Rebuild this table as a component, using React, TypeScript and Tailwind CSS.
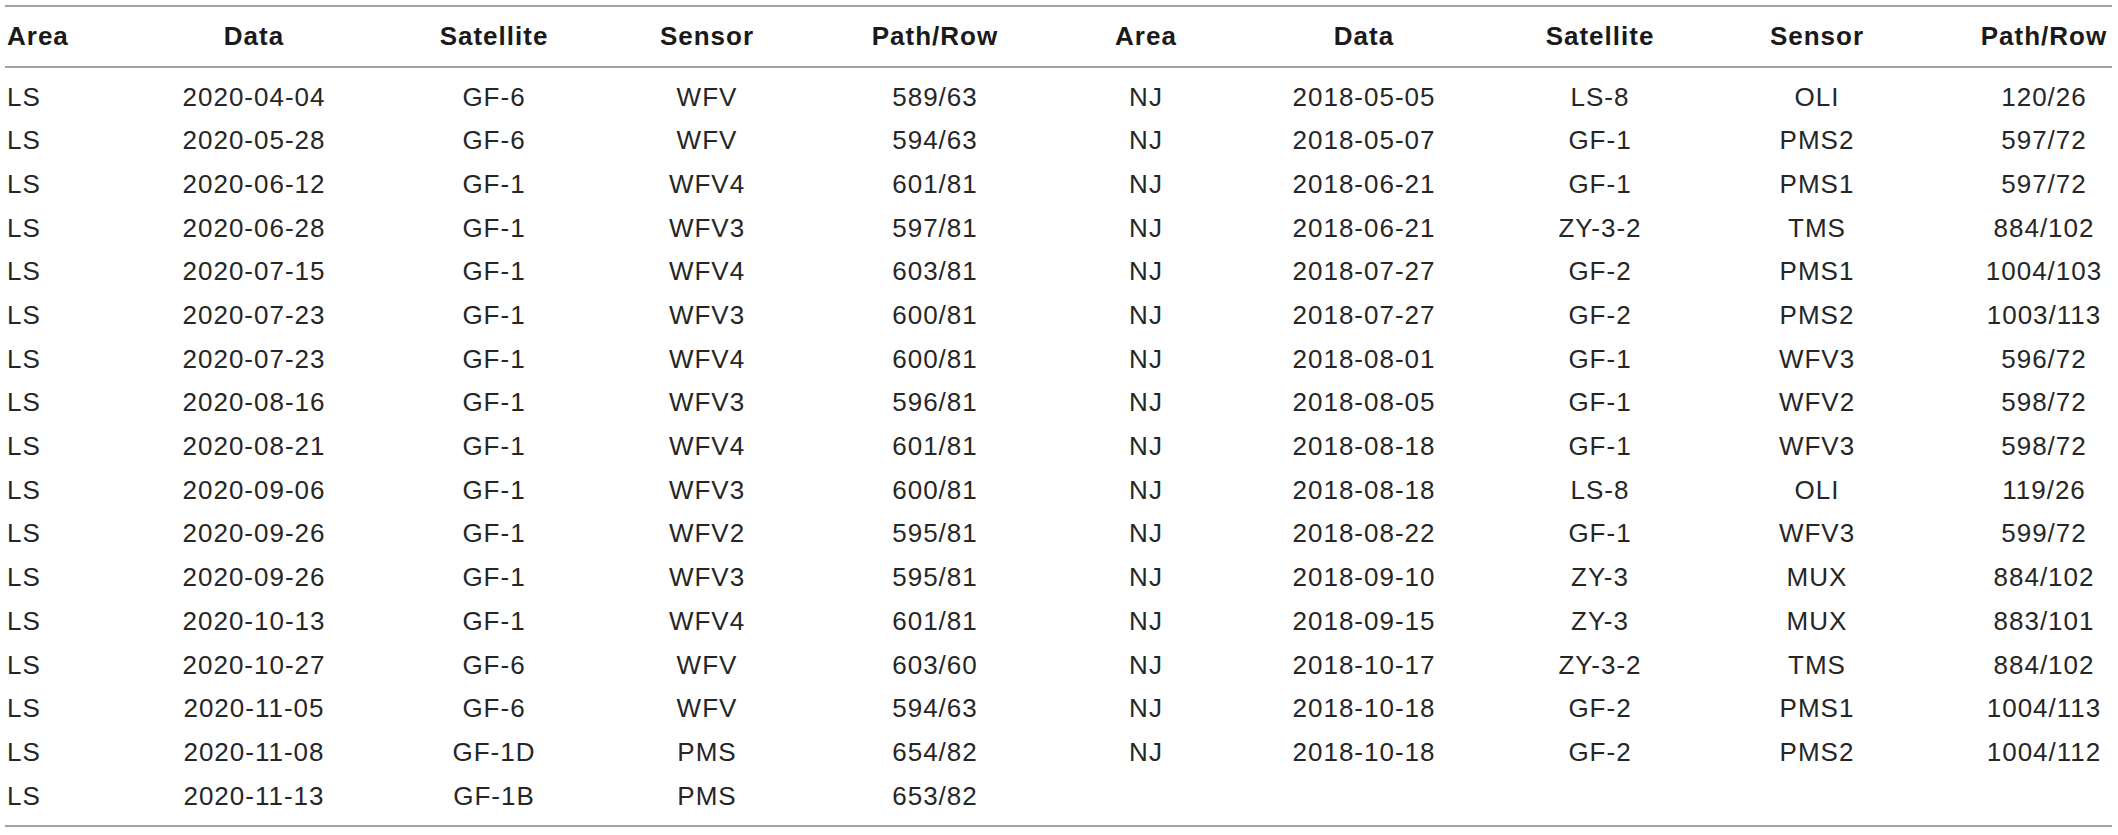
import React from 'react';

type Row = [string, string, string, string, string];

const left: Row[] = [
  ['LS', '2020-04-04', 'GF-6', 'WFV', '589/63'],
  ['LS', '2020-05-28', 'GF-6', 'WFV', '594/63'],
  ['LS', '2020-06-12', 'GF-1', 'WFV4', '601/81'],
  ['LS', '2020-06-28', 'GF-1', 'WFV3', '597/81'],
  ['LS', '2020-07-15', 'GF-1', 'WFV4', '603/81'],
  ['LS', '2020-07-23', 'GF-1', 'WFV3', '600/81'],
  ['LS', '2020-07-23', 'GF-1', 'WFV4', '600/81'],
  ['LS', '2020-08-16', 'GF-1', 'WFV3', '596/81'],
  ['LS', '2020-08-21', 'GF-1', 'WFV4', '601/81'],
  ['LS', '2020-09-06', 'GF-1', 'WFV3', '600/81'],
  ['LS', '2020-09-26', 'GF-1', 'WFV2', '595/81'],
  ['LS', '2020-09-26', 'GF-1', 'WFV3', '595/81'],
  ['LS', '2020-10-13', 'GF-1', 'WFV4', '601/81'],
  ['LS', '2020-10-27', 'GF-6', 'WFV', '603/60'],
  ['LS', '2020-11-05', 'GF-6', 'WFV', '594/63'],
  ['LS', '2020-11-08', 'GF-1D', 'PMS', '654/82'],
  ['LS', '2020-11-13', 'GF-1B', 'PMS', '653/82'],
];

const right: Row[] = [
  ['NJ', '2018-05-05', 'LS-8', 'OLI', '120/26'],
  ['NJ', '2018-05-07', 'GF-1', 'PMS2', '597/72'],
  ['NJ', '2018-06-21', 'GF-1', 'PMS1', '597/72'],
  ['NJ', '2018-06-21', 'ZY-3-2', 'TMS', '884/102'],
  ['NJ', '2018-07-27', 'GF-2', 'PMS1', '1004/103'],
  ['NJ', '2018-07-27', 'GF-2', 'PMS2', '1003/113'],
  ['NJ', '2018-08-01', 'GF-1', 'WFV3', '596/72'],
  ['NJ', '2018-08-05', 'GF-1', 'WFV2', '598/72'],
  ['NJ', '2018-08-18', 'GF-1', 'WFV3', '598/72'],
  ['NJ', '2018-08-18', 'LS-8', 'OLI', '119/26'],
  ['NJ', '2018-08-22', 'GF-1', 'WFV3', '599/72'],
  ['NJ', '2018-09-10', 'ZY-3', 'MUX', '884/102'],
  ['NJ', '2018-09-15', 'ZY-3', 'MUX', '883/101'],
  ['NJ', '2018-10-17', 'ZY-3-2', 'TMS', '884/102'],
  ['NJ', '2018-10-18', 'GF-2', 'PMS1', '1004/113'],
  ['NJ', '2018-10-18', 'GF-2', 'PMS2', '1004/112'],
];

const headers = ['Area', 'Data', 'Satellite', 'Sensor', 'Path/Row', 'Area', 'Data', 'Satellite', 'Sensor', 'Path/Row'];

// per-column alignment; first column is flush left, last one is nudged right
const cellClass = (i: number) =>
  i === 0 ? 'text-left pl-[2px]' : i === 9 ? 'text-center pl-[40px]' : 'text-center';

const cols =
  'grid grid-cols-[125px_248px_232px_194px_262px_160px_276px_196px_238px_176px]';

export default function App() {
  const rows = left.map((l, i) => [...l, ...(right[i] ?? ['', '', '', '', ''])]);

  return (
    <div className="w-[2118px] h-[835px] bg-white pt-[5px] pl-[5px] font-['Liberation_Sans',Arial,sans-serif] text-[26px] tracking-[1px]">
      <div className="w-[2107px] border-t-2 border-b-2 border-[#a3a3a3]">
        <div className={`${cols} h-[61px] items-center border-b-2 border-[#a3a3a3] font-bold text-[#1a1a1a]`}>
          {headers.map((h, i) => (
            <div key={i} className={`${cellClass(i)} leading-[59px]`}>
              {h}
            </div>
          ))}
        </div>
        <div className="pt-[7.6px] pb-[6.5px] text-[#262626]">
          {rows.map((r, ri) => (
            <div key={ri} className={`${cols} h-[43.7px] items-center`}>
              {r.map((c, ci) => (
                <div key={ci} className={`${cellClass(ci)} leading-[43.7px] whitespace-nowrap`}>
                  {c}
                </div>
              ))}
            </div>
          ))}
        </div>
      </div>
    </div>
  );
}
